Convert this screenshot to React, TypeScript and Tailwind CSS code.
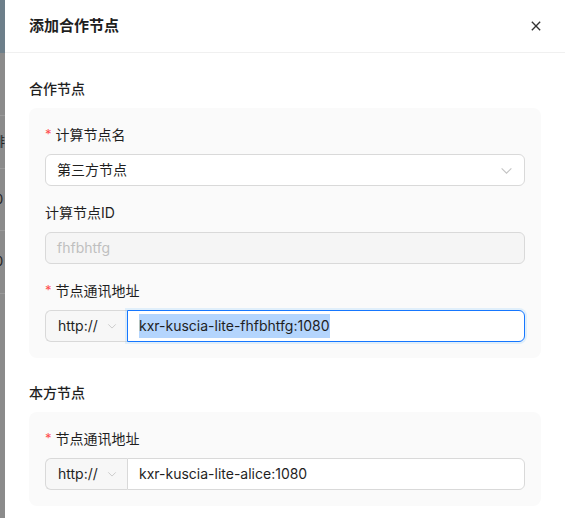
import React from "react";

const font = { fontFamily: 'Inter, "Noto Sans CJK SC", sans-serif' };

function Chevron({ className = "" }: { className?: string }) {
  return (
    <svg viewBox="0 0 12 12" className={className} fill="none" stroke="currentColor" strokeWidth="1">
      <path d="M1.5 4 L6 8.5 L10.5 4" />
    </svg>
  );
}

function Label({ text, required }: { text: string; required?: boolean }) {
  return (
    <div className="flex h-[22px] items-center mb-2 text-sm text-[#1f1f1f]">
      {required && <span className="mr-1 text-[#ff4d4f] text-[13px] leading-none -mt-[2px]">*</span>}
      {text}
    </div>
  );
}

function AddrInput({ value, focused }: { value: string; focused?: boolean }) {
  return (
    <div className="flex h-8 text-sm">
      <div className="flex w-[82px] items-center rounded-l-md border border-r-0 border-[#d9d9d9] bg-[#f7f7f7] pl-3 text-[#1f1f1f]">
        http://
        <Chevron className="ml-[9px] h-[10px] w-[10px] text-[#c4c4c4]" />
      </div>
      {focused ? (
        <div className="flex flex-1 items-center rounded-r-md border border-[#1677ff] bg-white px-[11px] text-[#1f1f1f] shadow-[0_0_0_2px_rgba(5,145,255,0.1)]">
          <span className="bg-[#b4d5fd] leading-[24px]">{value}</span>
        </div>
      ) : (
        <div className="flex flex-1 items-center rounded-r-md border border-[#d9d9d9] bg-white px-[11px] text-[#1f1f1f]">
          {value}
        </div>
      )}
    </div>
  );
}

export default function App() {
  return (
    <div className="flex h-[518px] w-[565px] overflow-hidden bg-white" style={font}>
      {/* 遮罩层下的页面一角 */}
      <div className="flex w-[5px] shrink-0 flex-col overflow-hidden bg-[#8b8b8b] text-[13px] text-[#222]">
        <div className="h-[53px] shrink-0 bg-[#6d7f8a]" />
        <div className="h-[62px] shrink-0" />
        <div className="h-px shrink-0 bg-[#9a9a9a]" />
        <div className="flex h-[52px] shrink-0 items-center -ml-[8px]">排</div>
        <div className="h-px shrink-0 bg-[#9a9a9a]" />
        <div className="flex h-[61px] shrink-0 items-center -ml-[5px]">0</div>
        <div className="h-px shrink-0 bg-[#9a9a9a]" />
        <div className="flex h-[62px] shrink-0 items-center -ml-[5px]">0</div>
        <div className="h-px shrink-0 bg-[#9a9a9a]" />
      </div>

      <div className="flex flex-1 flex-col">
        <div className="flex h-[53px] shrink-0 items-center justify-between border-b border-[#f0f0f0] px-6">
          <div className="text-[15px] font-semibold text-[#1f1f1f]">添加合作节点</div>
          <svg viewBox="0 0 12 12" className="h-[10px] w-[10px] text-[#333]" stroke="currentColor" strokeWidth="1.6">
            <path d="M1 1 L11 11 M11 1 L1 11" />
          </svg>
        </div>

        <div className="px-6 pt-[25px]">
          <div className="mb-2 text-sm font-medium leading-[22px] text-[#1f1f1f]">合作节点</div>
          <div className="rounded-lg bg-[#fafafa] p-4">
            <Label text="计算节点名" required />
            <div className="mb-4 flex h-8 items-center justify-between rounded-md border border-[#d9d9d9] bg-white px-[11px] text-sm text-[#1f1f1f]">
              第三方节点
              <Chevron className="h-[13px] w-[13px] text-[#c4c4c4]" />
            </div>

            <Label text="计算节点ID" />
            <div className="mb-4 flex h-8 items-center rounded-md border border-[#d9d9d9] bg-[#f5f5f5] px-[11px] text-sm text-[#bfbfbf]">
              fhfbhtfg
            </div>

            <Label text="节点通讯地址" required />
            <AddrInput value="kxr-kuscia-lite-fhfbhtfg:1080" focused />
          </div>

          <div className="mb-2 mt-6 text-sm font-medium leading-[22px] text-[#1f1f1f]">本方节点</div>
          <div className="rounded-lg bg-[#fafafa] p-4">
            <Label text="节点通讯地址" required />
            <AddrInput value="kxr-kuscia-lite-alice:1080" />
          </div>
        </div>
      </div>
    </div>
  );
}
